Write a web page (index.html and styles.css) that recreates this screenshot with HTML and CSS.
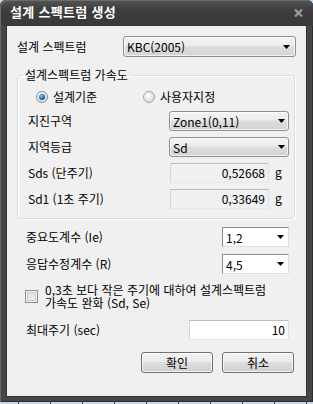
FILE: index.html
```html
<!DOCTYPE html>
<html lang="ko">
<head>
<meta charset="utf-8">
<title>설계 스펙트럼 생성</title>
<link rel="stylesheet" href="styles.css">
</head>
<body>
<div class="window">
  <div class="titlebar">
    <span class="title">설계 스펙트럼 생성</span>
    <svg class="close" width="9" height="8" viewBox="0 0 9 8"><path d="M1 0.5 L8 7.5 M8 0.5 L1 7.5" stroke="#9c9c9c" stroke-width="2.2" fill="none"/></svg>
  </div>
  <div class="client">
    <div class="row row-top">
      <span class="label">설계 스펙트럼</span>
      <div class="combo combo-btn combo-main"><span class="ctext">KBC(2005)</span><svg class="arrow" width="7" height="4" viewBox="0 0 7 4"><path d="M0 0 H7 L3.5 4 Z" fill="#000"/></svg></div>
    </div>

    <fieldset class="group">
      <legend>설계스펙트럼 가속도</legend>
      <div class="group-body">
        <div class="radios">
          <label class="radio radio-first">
            <svg class="rbox" width="12" height="12" viewBox="0 0 12 12">
              <defs>
                <radialGradient id="rg1" cx="0.4" cy="0.35" r="0.7"><stop offset="0" stop-color="#ffffff"/><stop offset="1" stop-color="#d8d8d8"/></radialGradient>
                <radialGradient id="dot" cx="0.4" cy="0.35" r="0.7"><stop offset="0" stop-color="#8fd0f5"/><stop offset="0.5" stop-color="#2a7fd0"/><stop offset="1" stop-color="#0d3f7a"/></radialGradient>
              </defs>
              <circle cx="6" cy="6" r="5.5" fill="url(#rg1)" stroke="#8e8f8f"/>
              <circle cx="6" cy="6" r="3" fill="url(#dot)"/>
            </svg>
            <span>설계기준</span>
          </label>
          <label class="radio">
            <svg class="rbox" width="12" height="12" viewBox="0 0 12 12">
              <defs>
                <radialGradient id="rg2" cx="0.4" cy="0.35" r="0.7"><stop offset="0" stop-color="#ffffff"/><stop offset="1" stop-color="#d4d4d4"/></radialGradient>
              </defs>
              <circle cx="6" cy="6" r="5.5" fill="url(#rg2)" stroke="#a5a5a5"/>
            </svg>
            <span>사용자지정</span>
          </label>
        </div>

        <div class="row row-g">
          <span class="label">지진구역</span>
          <div class="combo combo-btn combo-g"><span class="ctext">Zone1(0,11)</span><svg class="arrow" width="7" height="4" viewBox="0 0 7 4"><path d="M0 0 H7 L3.5 4 Z" fill="#000"/></svg></div>
        </div>
        <div class="row row-g">
          <span class="label">지역등급</span>
          <div class="combo combo-btn combo-g"><span class="ctext">Sd</span><svg class="arrow" width="7" height="4" viewBox="0 0 7 4"><path d="M0 0 H7 L3.5 4 Z" fill="#000"/></svg></div>
        </div>
        <div class="row row-g">
          <span class="label">Sds (단주기)</span>
          <div class="textbox readonly">0,52668</div>
          <span class="unit">g</span>
        </div>
        <div class="row row-g">
          <span class="label">Sd1 (1초 주기)</span>
          <div class="textbox readonly">0,33649</div>
          <span class="unit">g</span>
        </div>
      </div>
    </fieldset>

    <div class="row row-low first-low">
      <span class="label">중요도계수 (Ie)</span>
      <div class="combo combo-edit"><span class="ctext">1,2</span><svg class="arrow" width="7" height="4" viewBox="0 0 7 4"><path d="M0 0 H7 L3.5 4 Z" fill="#000"/></svg></div>
    </div>
    <div class="row row-low">
      <span class="label">응답수정계수 (R)</span>
      <div class="combo combo-edit"><span class="ctext">4,5</span><svg class="arrow" width="7" height="4" viewBox="0 0 7 4"><path d="M0 0 H7 L3.5 4 Z" fill="#000"/></svg></div>
    </div>

    <label class="check">
      <span class="cbox"></span>
      <span class="ctext2">0,3초 보다 작은 주기에 대하여 설계스펙트럼<br>가속도 완화 (Sd, Se)</span>
    </label>

    <div class="row row-low row-max">
      <span class="label">최대주기 (sec)</span>
      <div class="textbox white">10</div>
    </div>

    <div class="buttons">
      <button class="btn" type="button">확인</button>
      <button class="btn" type="button">취소</button>
    </div>
  </div>
</div>
</body>
</html>
```

FILE: styles.css
```css
* { box-sizing: border-box; }

html, body {
  margin: 0;
  padding: 0;
}

body {
  width: 313px;
  height: 404px;
  overflow: hidden;
  font-family: "Noto Sans CJK KR", "Noto Sans", sans-serif;
  font-size: 12px;
  line-height: 14px;
  color: #000;
  background-color: #c6d8ee;
  background-image: repeating-linear-gradient(90deg, transparent 0 18px, #3a4a5e 18px 19px, transparent 19px 32px);
}

.window {
  width: 313px;
  height: 402px;
  background: #464646;
  border-radius: 6px 6px 0 0;
  display: flex;
  flex-direction: column;
  box-shadow: inset 1px 1px 0 #6a6a6a, inset -1px 0 0 #2c2c2c, inset 0 -1px 0 #2c2c2c;
}

.titlebar {
  height: 26px;
  flex: none;
  display: flex;
  align-items: center;
  justify-content: space-between;
  padding: 0 10px 2px 10px;
  border-radius: 6px 6px 0 0;
  background: linear-gradient(#545454, #3c3c3c 40%, #3a3a3a);
  box-shadow: inset 1px 1px 0 #6c6c6c;
}

.title {
  color: #ffffff;
  font-weight: bold;
  font-size: 13px;
  letter-spacing: 0.3px;
}

.close { margin-right: 0; margin-top: 1px; }

.client {
  margin: 0 7px;
  height: 370px;
  background: #f0f0f0;
  padding: 10px 10px 0 10px;
  display: flex;
  flex-direction: column;
  box-shadow: 0 0 0 1px #333333;
}

.row {
  display: flex;
  align-items: center;
}

.label { flex: 1; white-space: nowrap; }

.row-top { height: 21px; }

.combo {
  position: relative;
  display: flex;
  align-items: center;
  justify-content: space-between;
  white-space: nowrap;
}

.combo-btn {
  border: 1px solid #8e8f8f;
  border-radius: 3px;
  background: linear-gradient(#f4f4f4, #ececec 45%, #dedede 50%, #d3d3d3);
  box-shadow: inset 0 0 0 1px rgba(255,255,255,0.7);
}

.combo-main {
  width: 173px;
  height: 21px;
  padding: 0 5px 0 3px;
}

.ctext { padding-top: 1px; }

.group {
  margin: 11px 1px 0 0;
  padding: 0 0 9px 5px;
  border: 1px solid #d5dfe5;
  border-radius: 3px;
  box-shadow: inset 1px 1px 0 #ffffff, 1px 1px 0 #ffffff;
  min-width: 0;
}

.group legend {
  padding: 0 2px;
  line-height: 14px;
}

.group-body {
  padding: 0 5px 0 5px;
  display: flex;
  flex-direction: column;
}

.radios {
  display: flex;
  align-items: center;
  height: 14px;
  margin-top: 8px;
  padding-left: 8px;
}

.radio {
  display: flex;
  align-items: center;
  gap: 5px;
}

.radio-first { width: 107px; }

.rbox { flex: none; }

.row-g { height: 20px; margin-top: 6px; }
.radios + .row-g { margin-top: 7px; }

.combo-g {
  width: 120px;
  height: 20px;
  padding: 0 3px 0 3px;
}

.textbox {
  height: 20px;
  border: 1px solid;
  border-color: #b9bcc2 #dfe3e8 #e3e7ec #d2d5da;
  text-align: right;
  padding: 1px 3px 0 3px;
  line-height: 16px;
}

.readonly { width: 99px; background: #f0f0f0; }

.unit { width: 20px; padding-left: 6px; padding-bottom: 2px; }

.row-low { height: 20px; margin-top: 7px; padding-left: 9px; padding-right: 7px; }
.first-low { margin-top: 8px; }

.combo-edit {
  width: 67px;
  height: 20px;
  background: #ffffff;
  border: 1px solid;
  border-color: #8a8a8a #e0e0e0 #e0e0e0 #8a8a8a;
  padding: 0 4px 0 3px;
}

.check {
  display: flex;
  align-items: center;
  gap: 7px;
  margin-top: 9px;
  padding-left: 8px;
}

.cbox {
  flex: none;
  width: 13px;
  height: 13px;
  border: 1px solid #8e8f8f;
  background: linear-gradient(135deg, #d8d8d8, #f6f6f6);
  box-shadow: inset 0 0 0 1px #f4f4f4, inset 0 0 0 2px #c9c9c9;
  margin-top: 1px;
}

.ctext2 { line-height: 13px; }

.row-max { margin-top: 11px; }

.row-max .white {
  width: 100px;
  background: #ffffff;
}

.buttons {
  display: flex;
  justify-content: flex-end;
  gap: 9px;
  margin-top: 12px;
  padding-right: 2px;
}

.btn {
  width: 72px;
  height: 21px;
  font-family: "Noto Sans CJK KR", "Noto Sans", sans-serif;
  font-size: 12px;
  line-height: 14px;
  color: #000;
  padding: 0;
  border: 1px solid #707070;
  border-radius: 3px;
  background: linear-gradient(#f2f2f2, #ebebeb 45%, #dddddd 50%, #cfcfcf);
  box-shadow: inset 0 0 0 1px rgba(255,255,255,0.75);
}
```
